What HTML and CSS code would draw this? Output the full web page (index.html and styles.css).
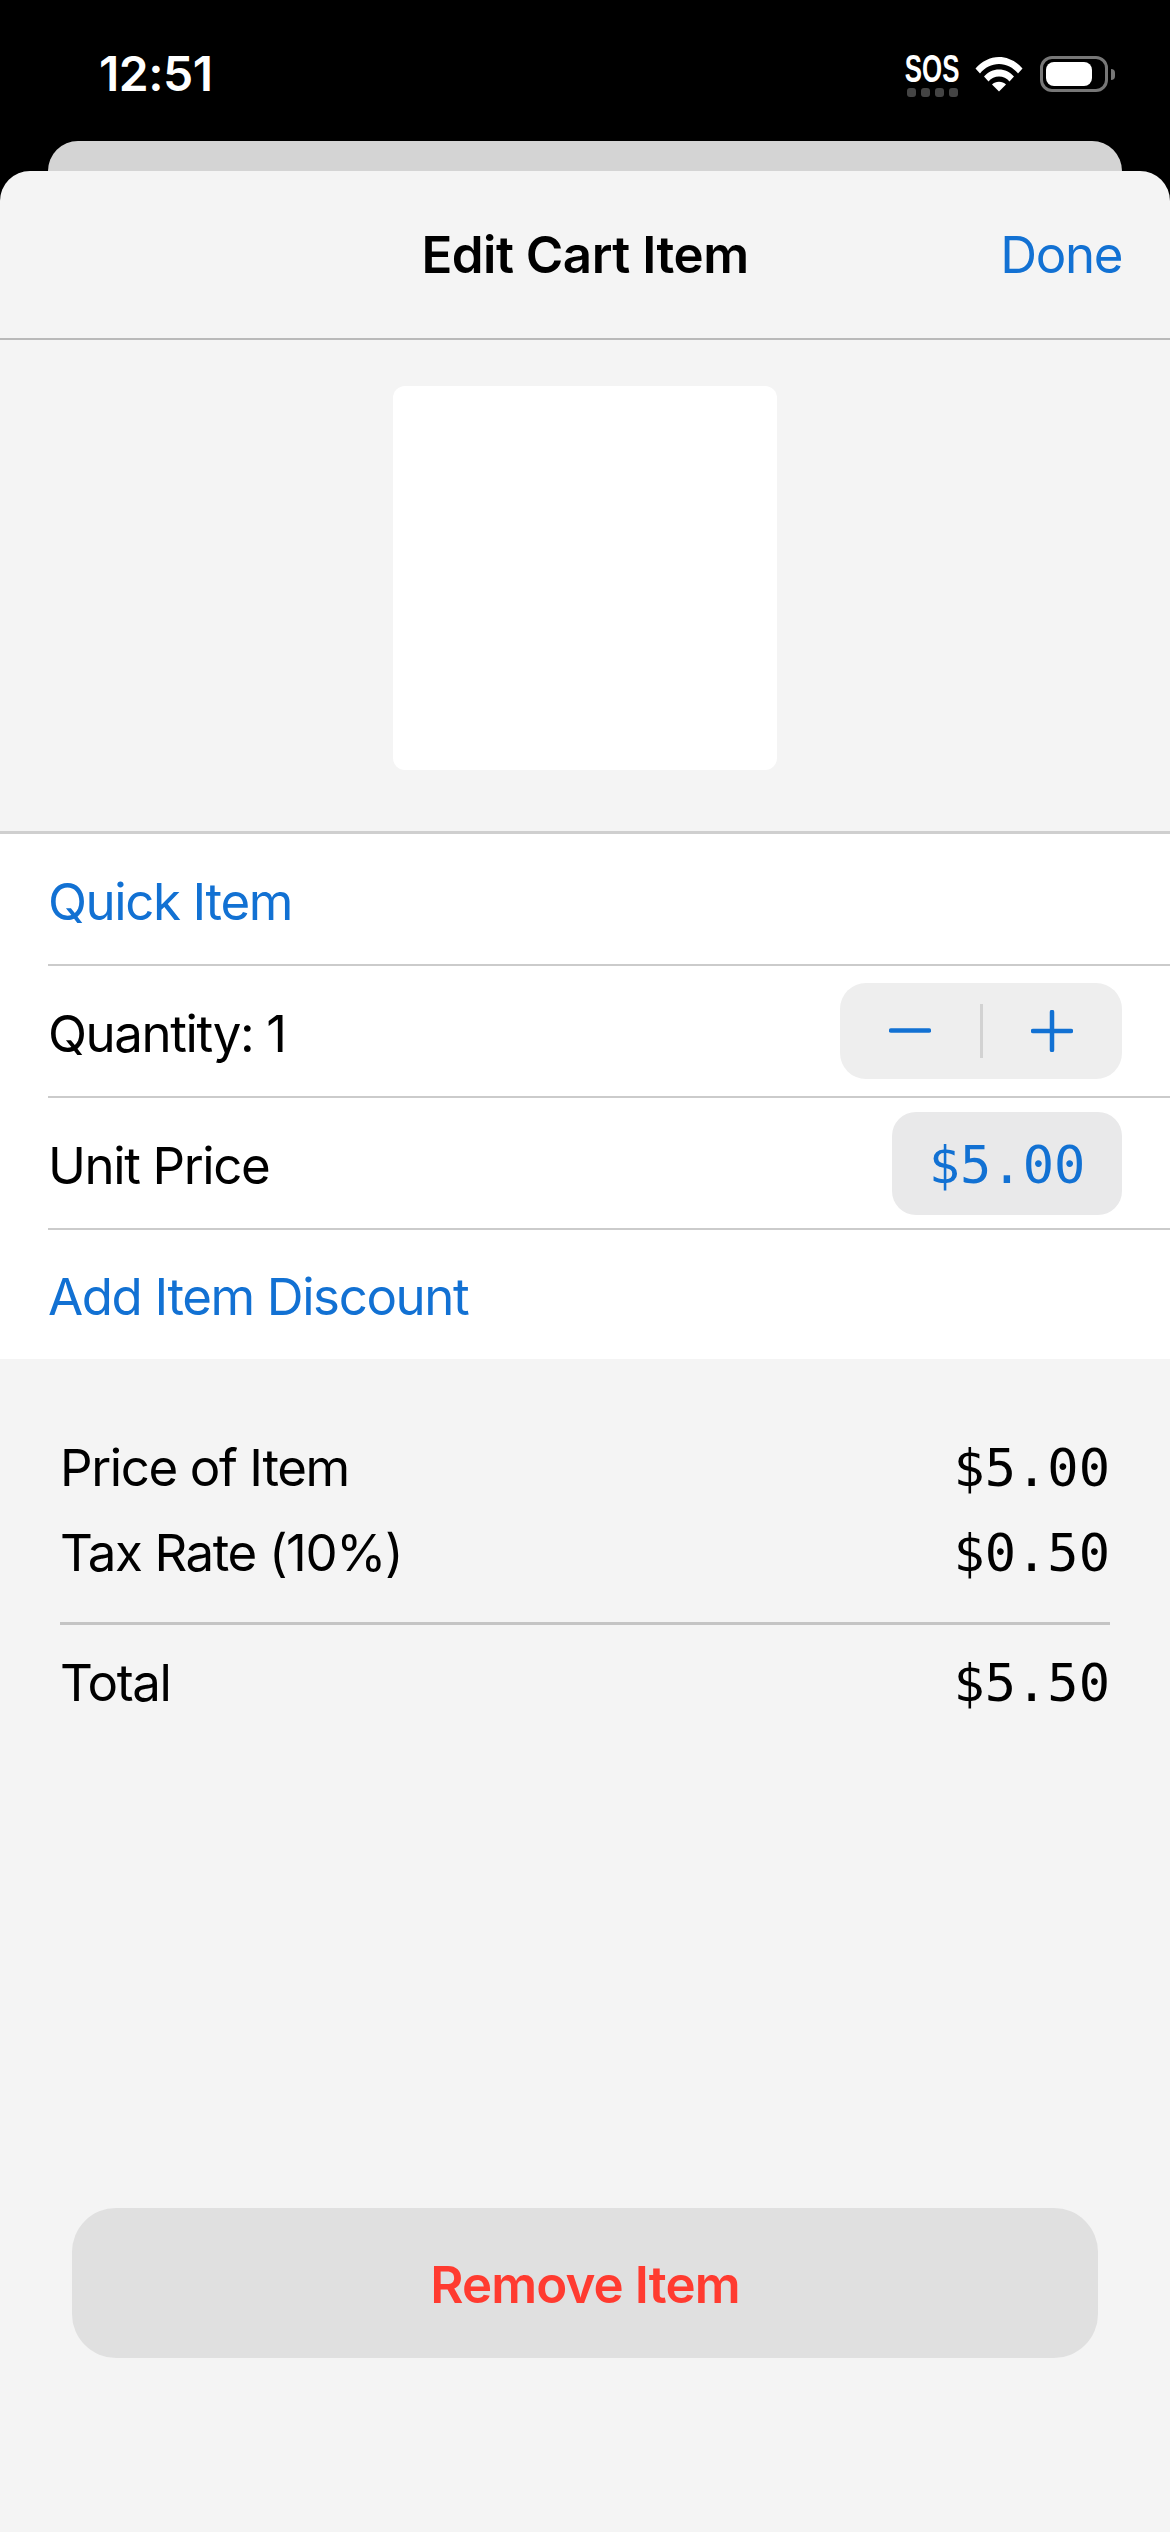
FILE: index.html
```html
<!DOCTYPE html>
<html lang="en">
<head>
  <meta charset="UTF-8" />
  <title>Edit Cart Item</title>
  <link rel="stylesheet" href="styles.css">
</head>
<body>

  <!-- Status bar -->
  <div class="status-bar">
    <span class="clock">12:51</span>
    <div class="status-icons">
      <div class="sos">
        <span class="sos-text">SOS</span>
        <div class="sos-dots"><i></i><i></i><i></i><i></i></div>
      </div>
      <svg class="wifi" width="48" height="36" viewBox="0 0 48 36" aria-hidden="true">
        <path d="M0.5 12.5 C6.5 5.5 15 1 24 1 C33 1 41.500 5.5 47.500 12.500 L43 17.500 C38 11.500 31.500 8 24 8 C16.500 8 10 11.500 5 17.500 Z" fill="#fff"/>
        <path d="M9 20.500 C13 16 18.200 13.500 24 13.500 C29.800 13.500 35 16 39 20.500 L34.500 25.500 C31.800 22.300 28 20.500 24 20.500 C20 20.500 16.200 22.300 13.500 25.500 Z" fill="#fff"/>
        <path d="M17 28.500 C18.800 26.700 21.300 25.700 24 25.700 C26.700 25.700 29.200 26.700 31 28.500 L24 35.500 Z" fill="#fff"/>
      </svg>
      <div class="battery">
        <div class="battery-body"><div class="battery-fill"></div></div>
        <div class="battery-nub"></div>
      </div>
    </div>
  </div>

  <div class="back-card"></div>

  <div class="sheet">
    <div class="nav">
      <span></span>
      <h1>Edit Cart Item</h1>
      <a class="done link">Done</a>
    </div>

    <div class="photo-wrap">
      <div class="photo"></div>
    </div>

    <div class="list">
      <div class="row"><span class="link">Quick Item</span></div>
      <div class="row">
        <span>Quantity: 1</span>
        <div class="stepper">
          <svg width="42" height="42" viewBox="0 0 42 42" aria-hidden="true"><path d="M2 20.500 H40" class="stroke"/></svg>
          <div class="stepper-line"></div>
          <svg width="42" height="42" viewBox="0 0 42 42" aria-hidden="true"><path d="M2 21 H40 M21 2 V40" class="stroke"/></svg>
        </div>
      </div>
      <div class="row">
        <span>Unit Price</span>
        <div class="price-box">$5.00</div>
      </div>
      <div class="row last"><span class="link">Add Item Discount</span></div>
    </div>

    <div class="summary">
      <div class="summary-row"><span>Price of Item</span><span class="mono">$5.00</span></div>
      <div class="summary-row"><span>Tax Rate (10%)</span><span class="mono">$0.50</span></div>
      <div class="summary-line"></div>
      <div class="summary-row"><span>Total</span><span class="mono">$5.50</span></div>
    </div>

    <button class="remove-btn">Remove Item</button>
  </div>

</body>
</html>
```

FILE: styles.css
```css
/* Reset */
* {
  box-sizing: border-box;
}

html, body {
  margin: 0;
  height: 2532px;
  overflow: hidden;
}

body {
  background: #000;
  color: #000;
  font-family: Inter, 'Noto Sans', sans-serif;
  font-size: 51px;
  letter-spacing: -1.4px;
  display: flex;
  flex-direction: column;
}

.link {
  color: #1271d3;
}

/* Status bar */
.status-bar {
  height: 141px;
  flex-shrink: 0;
  padding: 47px 55px 0 99px;
  display: flex;
  justify-content: space-between;
  align-items: flex-start;
  color: #fff;
}
.clock {
  font-size: 48px;
  font-weight: 600;
  line-height: 54px;
  letter-spacing: -0.5px;
}
.status-icons {
  display: flex;
  align-items: flex-start;
  margin-top: 9px;
}
.sos {
  width: 56px;
  margin-right: 15px;
  display: flex;
  flex-direction: column;
  align-items: center;
}
.sos-text {
  font-family: 'Liberation Sans', sans-serif;
  font-size: 38px;
  font-weight: 700;
  line-height: 27px;
  letter-spacing: 0;
  transform: scaleX(0.68);
}
.sos-dots {
  display: flex;
  gap: 5px;
  margin-top: 5px;
}
.sos-dots i {
  width: 9px;
  height: 9px;
  border-radius: 3px;
  background: #444;
}
.wifi {
  margin-right: 17px;
}
.battery {
  display: flex;
  align-items: center;
}
.battery-body {
  width: 68px;
  height: 36px;
  border: 3px solid #777;
  border-radius: 12px;
  padding: 3px;
}
.battery-fill {
  width: 46px;
  height: 100%;
  background: #fff;
  border-radius: 8px;
}
.battery-nub {
  width: 4px;
  height: 11px;
  margin-left: 3px;
  background: #777;
  border-radius: 0 4px 4px 0;
}

.back-card {
  height: 30px;
  flex-shrink: 0;
  margin: 0 48px;
  background: #d4d4d4;
  border-radius: 30px 30px 0 0;
}

/* Sheet */
.sheet {
  flex: 1;
  background: #f4f4f4;
  border-radius: 30px 30px 0 0;
  display: flex;
  flex-direction: column;
}

.nav {
  height: 169px;
  flex-shrink: 0;
  padding: 0 48px;
  border-bottom: 2px solid #b9b9b9;
  display: grid;
  grid-template-columns: 1fr auto 1fr;
  align-items: center;
}
.nav h1 {
  margin: 0;
  font-size: 51px;
  font-weight: 600;
  letter-spacing: -0.5px;
}
.done {
  text-align: right;
}

.photo-wrap {
  padding: 46px 0 61px;
  display: flex;
  justify-content: center;
}
.photo {
  width: 384px;
  height: 384px;
  background: #fff;
  border-radius: 12px;
}

.list {
  background: #fff;
  border-top: 3px solid #cfcfcf;
}
.row {
  height: 132px;
  margin-left: 48px;
  padding-right: 48px;
  border-bottom: 2px solid #cbcbcb;
  display: flex;
  justify-content: space-between;
  align-items: center;
}
.row > span {
  margin-top: 4px;
}
.row.last {
  height: 129px;
  border-bottom: none;
}

.stepper {
  width: 282px;
  height: 96px;
  background: #eeeeee;
  border-radius: 26px;
  display: flex;
  justify-content: space-between;
  align-items: center;
  padding: 0 49px;
}
.stroke {
  fill: none;
  stroke: #1271d3;
  stroke-width: 4.5;
  stroke-linecap: round;
}
.stepper-line {
  width: 3px;
  height: 54px;
  background: #d2d2d2;
}

.price-box {
  width: 230px;
  height: 103px;
  padding-top: 4px;
  background: #e9e9ea;
  border-radius: 24px;
  color: #1271d3;
  font-family: 'DejaVu Sans Mono', 'Liberation Mono', monospace;
  font-size: 52px;
  letter-spacing: 0;
  display: flex;
  align-items: center;
  justify-content: center;
}

.summary {
  padding: 66px 60px 0;
}
.summary-row {
  height: 85px;
  display: flex;
  justify-content: space-between;
  align-items: center;
}
.mono {
  font-family: 'DejaVu Sans Mono', 'Liberation Mono', monospace;
  font-size: 52px;
  letter-spacing: 0;
}
.summary-line {
  height: 3px;
  margin: 27px 0 15px;
  background: #c4c4c4;
}

.remove-btn {
  margin: auto 72px 174px;
  height: 150px;
  padding-top: 3px;
  border: none;
  border-radius: 44px;
  background: #e0e0e0;
  color: #ff3b30;
  font-family: inherit;
  font-size: 51px;
  font-weight: 600;
  letter-spacing: -0.9px;
}
```
